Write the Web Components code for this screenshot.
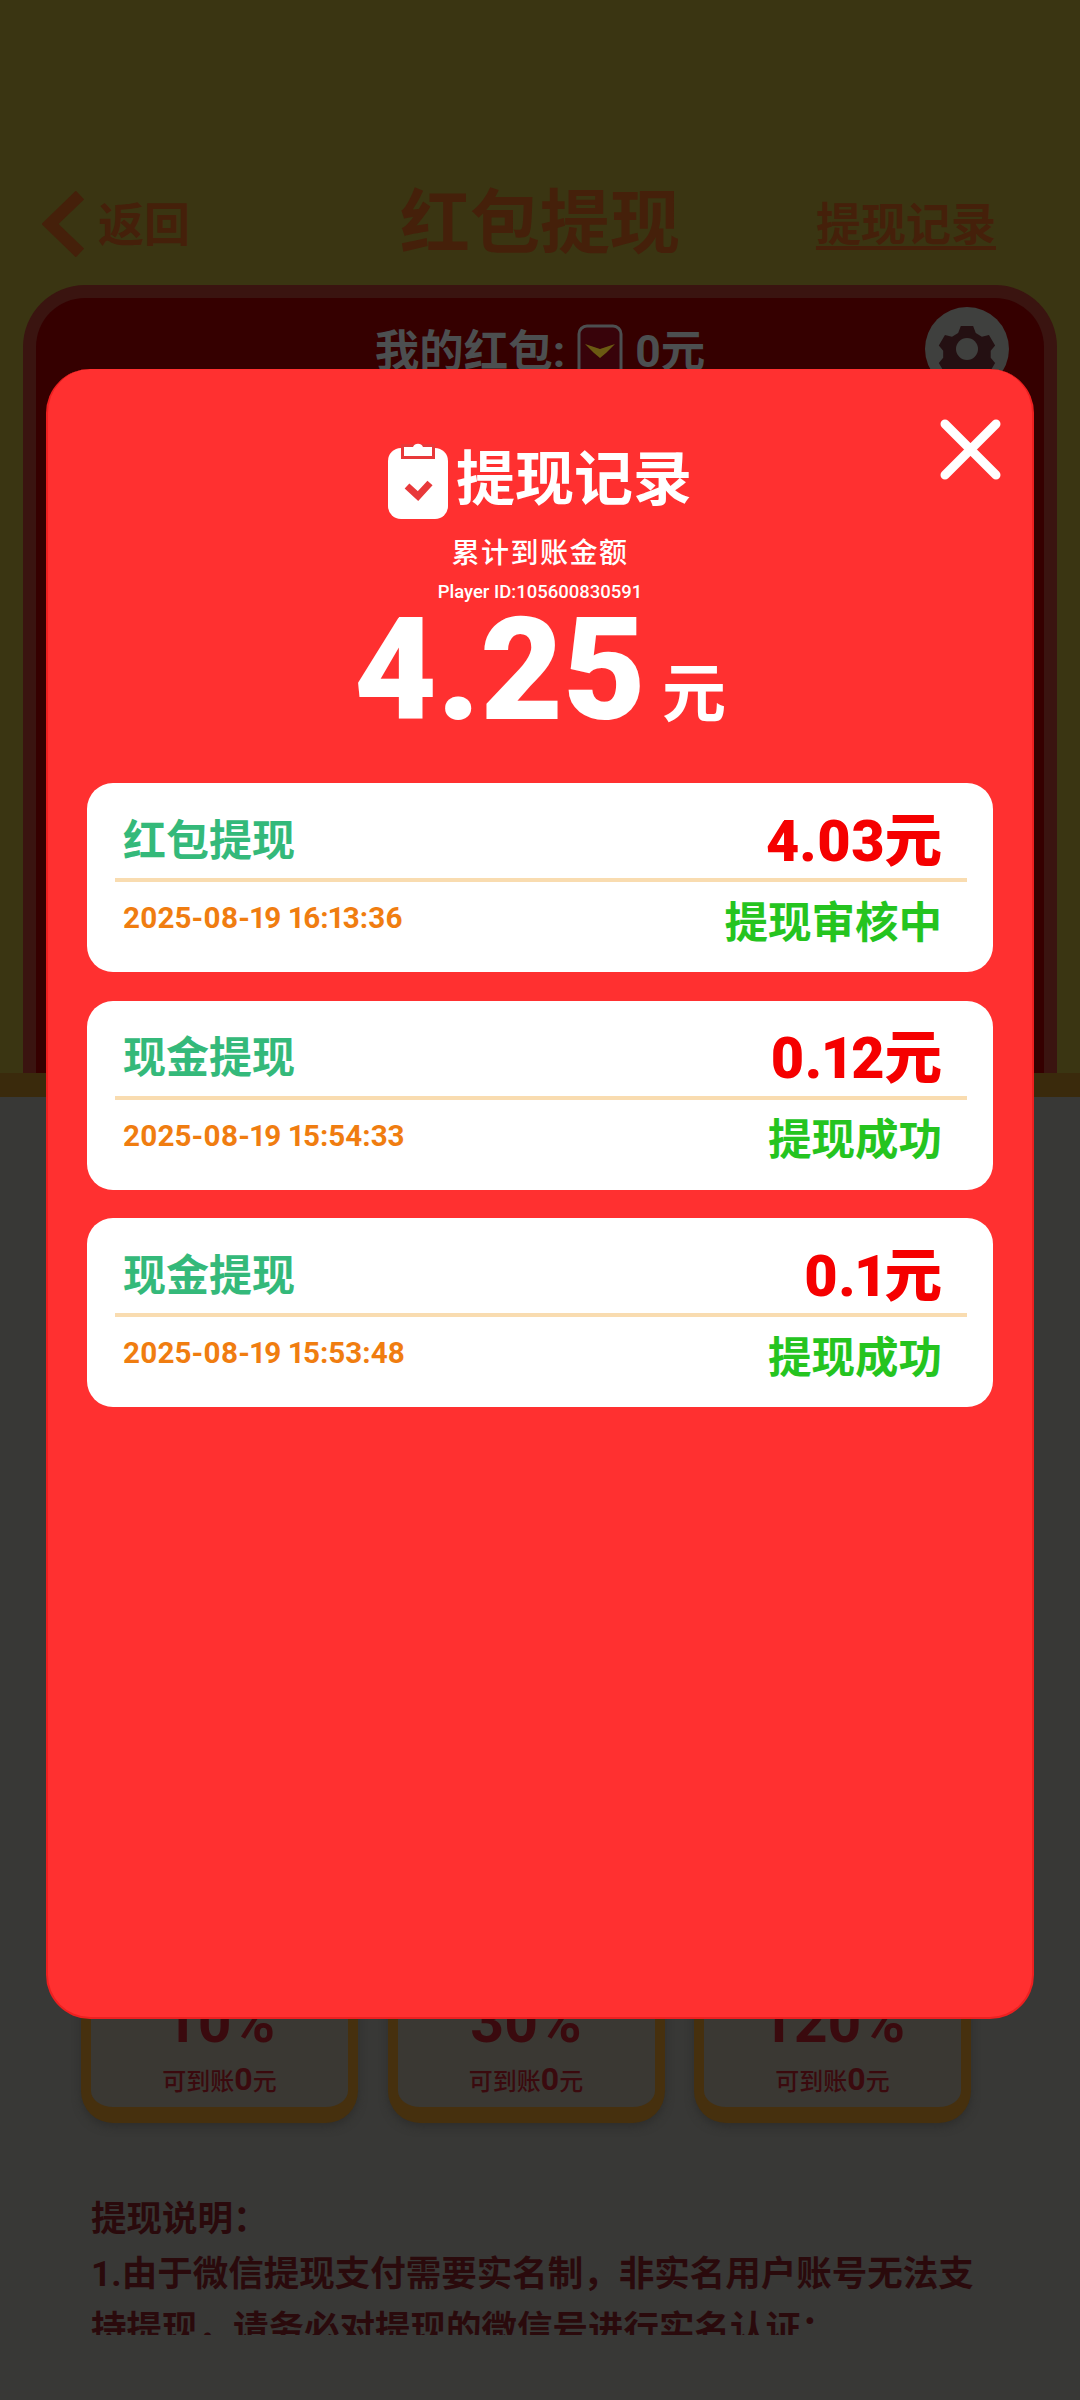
<!DOCTYPE html>
<html lang="zh">
<head>
<meta charset="utf-8">
<title>红包提现</title>
<style>
  html, body { margin: 0; padding: 0; background: #383836; }
  body { font-family: "Roboto", "Noto Sans CJK SC", sans-serif; }
</style>
</head>
<body>
<withdraw-page>
  <pack-card slot="packs" percent="10%"></pack-card>
  <pack-card slot="packs" percent="30%"></pack-card>
  <pack-card slot="packs" percent="120%"></pack-card>
</withdraw-page>

<record-modal total="4.25" player="105600830591">
  <record-card>
    <span slot="title">红包提现</span>
    <span slot="amount">4.03元</span>
    <span slot="time">2025-08-19 16:13:36</span>
    <span slot="status">提现审核中</span>
  </record-card>
  <record-card>
    <span slot="title">现金提现</span>
    <span slot="amount">0.12元</span>
    <span slot="time">2025-08-19 15:54:33</span>
    <span slot="status">提现成功</span>
  </record-card>
  <record-card>
    <span slot="title">现金提现</span>
    <span slot="amount">0.1元</span>
    <span slot="time">2025-08-19 15:53:48</span>
    <span slot="status">提现成功</span>
  </record-card>
</record-modal>

<script>
const fontStack = '"Roboto", "Noto Sans CJK SC", sans-serif';

// the page behind the dialog, colours are already dimmed
class WithdrawPage extends HTMLElement {
  connectedCallback() {
    this.attachShadow({ mode: 'open' }).innerHTML = `
      <style>
        :host { display: block; height: 2400px; background: #383836; font-family: ${fontStack}; font-weight: 700; }
        .top { height: 1073px; background: #3a3512; display: flex; flex-direction: column; }
        header {
          flex: none; height: 80px; padding: 184px 0 21px; color: #45200a;
          display: grid; grid-template-columns: 1fr auto 1fr; align-items: center;
        }
        .back { display: flex; align-items: center; gap: 14px; padding-left: 42px; font-size: 46px; }
        .back span { margin-bottom: 6px; }
        h1 { margin: 0; font-size: 70px; line-height: 80px; font-weight: 700; }
        .history { justify-self: end; margin: 0 84px 5px 0; font-size: 45px; text-decoration: underline; text-decoration-thickness: 4px; text-underline-offset: 5px; }
        .wallet {
          flex: 1; margin: 0 23px; border: 13px solid #3a1410; border-bottom: 0;
          border-radius: 62px 62px 0 0; background: #350000; position: relative;
        }
        .balance { display: flex; justify-content: center; align-items: center; gap: 12px; padding-top: 26px; color: #4c4f50; font-size: 44.5px; line-height: 50px; }
        .gear { position: absolute; left: 889px; top: 9px; width: 84px; height: 84px; }
        .band { height: 24px; background: #3a2a0c; }
        .packs { display: grid; grid-template-columns: repeat(3, 277px); justify-content: space-between; margin: 826px 109px 0 81px; }
        .notes { height: 143px; margin: 69px 85px 0 91px; overflow: hidden; color: #2a0a0c; font-size: 35.5px; line-height: 55px; font-weight: 700; }
        p { margin: 0; }
      </style>
      <div class="top">
        <header>
          <div class="back">
            <svg width="42" height="66" viewBox="0 0 42 66"><path d="M38 4 8 33l30 29" fill="none" stroke="#45200a" stroke-width="12"/></svg>
            <span>返回</span>
          </div>
          <h1>红包提现</h1>
          <div class="history">提现记录</div>
        </header>
        <section class="wallet">
          <div class="balance">
            <span>我的红包:</span>
            <svg width="46" height="56" viewBox="0 0 46 56">
              <rect x="2" y="2" width="42" height="52" rx="8" fill="#38030a" stroke="#4c4f50" stroke-width="3"/>
              <path d="M8 20l15 5 15-5-9 9-6 5-6-5z" fill="#6b5a12"/>
            </svg>
            <span>0元</span>
          </div>
          <svg class="gear" viewBox="0 0 84 84">
            <circle cx="42" cy="42" r="42" fill="#3f403e"/>
            <path d="M35 16h14l3 8 7 4 8-2 7 12-5 6v8l5 6-7 12-8-2-7 4-3 8H35l-3-8-7-4-8 2-7-12 5-6v-8l-5-6 7-12 8 2 7-4z" transform="translate(5 5) scale(.88)" fill="#241012"/>
            <circle cx="42" cy="42" r="11" fill="#3f403e"/>
          </svg>
        </section>
      </div>
      <div class="band"></div>
      <div class="packs"><slot name="packs"></slot></div>
      <div class="notes">
        <p>提现说明：</p>
        <p>1.由于微信提现支付需要实名制，非实名用户账号无法支持提现，请务必对提现的微信号进行实名认证：</p>
      </div>
    `;
  }
}

class PackCard extends HTMLElement {
  connectedCallback() {
    const percent = this.getAttribute('percent');
    this.attachShadow({ mode: 'open' }).innerHTML = `
      <style>
        :host {
          display: flex; flex-direction: column; align-items: center; justify-content: flex-end;
          box-sizing: border-box; height: 200px; padding-bottom: 10px;
          background: #3a3833; color: #3a0a0e; font-weight: 700;
          border: 10px solid #46300e; border-bottom-width: 16px; border-radius: 32px;
          box-shadow: 0 4px 8px #2e2e2c;
        }
        .pct { font-size: 59px; line-height: 64px; }
        .sub { margin-top: 10px; font-size: 24px; line-height: 30px; white-space: nowrap; font-weight: 500; }
        b { font-size: 32px; font-weight: 700; }
      </style>
      <div class="pct">${percent}</div>
      <div class="sub">可到账<b>0</b>元</div>
    `;
  }
}

class RecordModal extends HTMLElement {
  connectedCallback() {
    const total = this.getAttribute('total');
    const player = this.getAttribute('player');
    this.attachShadow({ mode: 'open' }).innerHTML = `
      <style>
        :host {
          position: absolute; left: 46px; top: 369px; width: 988px; height: 1650px; box-sizing: border-box;
          background: #ff3030; border-radius: 44px; color: #fff;
          border: 2px solid #ee2020; border-top-width: 0; font-family: ${fontStack}; font-weight: 700;
          padding: 71px 39px 0;
        }
        .head { display: flex; justify-content: center; align-items: center; gap: 8px; height: 79px; font-size: 59px; line-height: 79px; }
        .label { margin-top: 15px; text-align: center; font-size: 28px; line-height: 40px; font-weight: 500; letter-spacing: 1.5px; }
        .player { margin-top: 6px; text-align: center; font-size: 18.5px; line-height: 24px; font-weight: 500; }
        .total { display: flex; justify-content: center; align-items: baseline; gap: 16px; height: 120px; margin-top: 6px; font-size: 143px; line-height: 120px; font-weight: 900; }
        .total span { font-size: 64px; font-weight: 700; transform: translateY(-3px); }
        .list { display: flex; flex-direction: column; gap: 28.5px; margin-top: 53px; }
        .close { position: absolute; left: 891px; top: 49px; }
      </style>
      <div class="head">
        <svg width="60" height="79" viewBox="0 0 60 79">
          <rect y="8" width="60" height="71" rx="13" fill="#fff"/>
          <path d="M13 4h34v15H13z" fill="#e8393a"/>
          <path d="M16 7h9a5.500 5.500 0 0 1 10 0h9v9H16z" fill="#fff"/>
          <path d="M19 46l11 10 12-13" fill="none" stroke="#e8393a" stroke-width="7"/>
        </svg>
        <span>提现记录</span>
      </div>
      <div class="label">累计到账金额</div>
      <div class="player">Player ID:${player}</div>
      <div class="total">${total}<span>元</span></div>
      <div class="list"><slot></slot></div>
      <svg class="close" width="63" height="63" viewBox="0 0 63 63">
        <path d="M6 6l51 51M57 6 6 57" stroke="#fff" stroke-width="9" stroke-linecap="round"/>
      </svg>
    `;
  }
}

class RecordCard extends HTMLElement {
  connectedCallback() {
    this.attachShadow({ mode: 'open' }).innerHTML = `
      <style>
        :host { display: block; height: 189px; background: #fff; border-radius: 26px; padding: 0 26px 0 28px; font-weight: 700; font-variant-numeric: proportional-nums; }
        .row { display: flex; justify-content: space-between; align-items: center; padding: 0 25px 0 8px; }
        .upper { border-bottom: 4px solid #f9dcb0; box-sizing: border-box; height: 99px; padding-top: 10px; }
        .lower { height: 74px; }
        .title { color: #34b97a; font-size: 43px; margin-top: 2px; }
        .amount { color: #f50000; font-size: 57.5px; font-weight: 900; }
        .time { color: #f07d10; font-size: 29.6px; margin-bottom: 2px; }
        .status { color: #25c41f; font-size: 43.5px; }
      </style>
      <div class="row upper">
        <div class="title"><slot name="title"></slot></div>
        <div class="amount"><slot name="amount"></slot></div>
      </div>
      <div class="row lower">
        <div class="time"><slot name="time"></slot></div>
        <div class="status"><slot name="status"></slot></div>
      </div>
    `;
  }
}

customElements.define('withdraw-page', WithdrawPage);
customElements.define('pack-card', PackCard);
customElements.define('record-modal', RecordModal);
customElements.define('record-card', RecordCard);
</script>
</body>
</html>
